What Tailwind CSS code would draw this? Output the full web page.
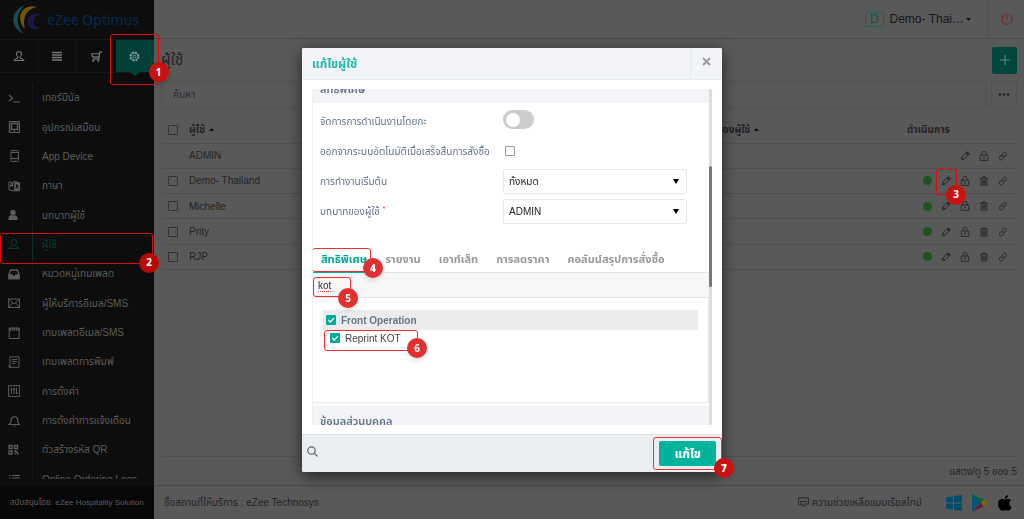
<!DOCTYPE html>
<html lang="th">
<head>
<meta charset="utf-8">
<meta name="viewport" content="width=device-width, initial-scale=1">
<title>eZee Optimus</title>
<script src="https://cdn.jsdelivr.net/npm/@tailwindcss/browser@4"></script>
</head>
<body class="h-screen overflow-hidden bg-[#595959] font-['Liberation_Sans','Noto_Sans_Thai','Noto_Sans',sans-serif] text-[10px] text-[#242424]">
<svg class="hidden">
  <symbol id="user" viewBox="0 0 16 16" fill="none" stroke="currentColor" stroke-width="1.400"><path d="M6.400 9.200C3.400 6.600 4.300 2 8 2s4.600 4.600 1.600 7.200v1.200c0 .8 4.700 1.100 4.900 3.600h-13c.2-2.500 4.900-2.800 4.900-3.600z"/></symbol>
  <symbol id="pencil" viewBox="0 0 16 16" fill="none" stroke="currentColor" stroke-width="1.500" stroke-linejoin="round"><path d="M2 14l1-4.500L10.500 2q1-1 2.300.2l1 1q1.200 1.300.2 2.300L6.500 13z"/><path d="M9.500 3l3.500 3.500M3 10l3 3" /><path d="M11 2.500l2.500 2.500" stroke-width="3"/></symbol>
  <symbol id="lock" viewBox="0 0 16 16" fill="none" stroke="currentColor" stroke-width="1.300"><path d="M2 6.500h12V15H2zM4.500 6.500V4a3.500 3.500 0 0 1 7 0v2.500M8 9v3.500M6.800 10h2.400"/></symbol>
  <symbol id="trash" viewBox="0 0 16 16" fill="none" stroke="currentColor" stroke-width="1.500"><path d="M2 3.500h12M6 3.500V1.500h4v2M3.500 4v10.500h9V4M6.200 6v6.500M8 6v6.500M9.800 6v6.500"/></symbol>
  <symbol id="link" viewBox="0 0 16 16" fill="none" stroke="currentColor" stroke-width="1.500"><path d="M7 9.500C5 8 6.500 6 7.500 4.500S10 1 12 2s2 3 1 4.500S11 9.500 9.500 9"/><path d="M9 6.500c2 1.500.5 3.500-.5 5S6 15 4 14s-2-3-1-4.500S5 6.500 6.500 7"/></symbol>
</svg>

<div class="flex h-full">
  <!-- Sidebar -->
  <aside class="relative z-10 flex w-[154px] shrink-0 flex-col bg-[#0d0d0d] text-[#5c5c5c]">
    <a href="#" class="flex h-[39px] items-center gap-1.5 pl-[13px] font-['Noto_Sans',sans-serif] text-[14px] text-[#062a4d]">
      <svg class="h-[29px] w-7" viewBox="0 0 28 29"><path d="M12 0C-3 6-4 22 11 29 2 21 3 8 12 0z" fill="#174c52"/><path d="M24 2C8-2 2 14 12 24 9 13 13 4 24 2z" fill="#715600"/><path d="M27 9c-11-3-17 9-8 15 4 1 6 0 8-2-8 1-10-9 0-13z" fill="#161a45"/></svg>
      <span>eZee Optimus</span>
    </a>
    <nav class="grid h-[34px] grid-cols-4 border-y border-[#161616] text-[#777]">
      <button class="flex items-center justify-center border-r border-[#161616]" aria-label="ผู้ใช้"><svg class="size-3"><use href="#user"/></svg></button>
      <button class="flex items-center justify-center border-r border-[#161616]" aria-label="เมนู"><svg class="size-[10px]" viewBox="0 0 10 10" stroke="currentColor" stroke-width="1.300"><path d="M0 1.500h10M0 4h10M0 6.500h10M0 9h10"/></svg></button>
      <button class="flex items-center justify-center" aria-label="รถเข็น"><svg class="size-[11px]" viewBox="0 0 12 12" fill="none" stroke="currentColor" stroke-width="1.300"><path d="M12 1.200H9.500L8.800 8.500H2M9.300 3H.8l.8 3.500h7.200"/><circle cx="2.500" cy="10.500" r=".6"/><circle cx="8" cy="10.500" r=".6"/></svg></button>
      <button class="relative flex items-center justify-center bg-[#004037] text-[#7f9f9b]" aria-label="ตั้งค่า">
        <svg class="size-[11px]" viewBox="0 0 12 12" fill="none" stroke="currentColor"><circle cx="6" cy="6" r="4.700" stroke-width="1.500" stroke-dasharray="2.200 1.500"/><circle cx="6" cy="6" r="3.800"/><circle cx="6" cy="6" r="1.500"/></svg>
        <svg class="absolute top-full h-1 w-2.5" viewBox="0 0 10 4"><path d="M0 0h10L5 4z" fill="#004037"/></svg>
        <span class="absolute -top-1.5 -left-[6px] h-[51px] w-[49px] rounded-[3px] border border-[#e00808]"></span>
        <span class="absolute top-[22px] left-[33px] z-10 flex size-5 items-center justify-center rounded-full bg-[#c91212] font-['Noto_Sans'] text-[10px] font-bold text-white shadow-md">1</span>
      </button>
    </nav>
    <div class="mt-[10px] min-h-0 flex-1 overflow-y-clip">
      <ul class="grid h-[411px] grid-rows-[repeat(14,1fr)] [&_a]:flex [&_a]:h-full [&_a]:items-center [&_span]:flex [&_span]:h-full [&_span]:w-[33px] [&_span]:items-center [&_span]:border-r [&_span]:border-[#181818] [&_span]:pl-2 [&_a]:gap-[9px] [&_svg]:size-3 [&_a]:whitespace-nowrap">
        <li><a href="#"><span><svg viewBox="0 0 12 12" fill="none" stroke="currentColor" stroke-width="1.200"><path d="M1 3l3.500 3L1 9M5 10h7"/></svg></span>เทอร์มินัล</a></li>
        <li><a href="#"><span><svg viewBox="0 0 12 12" fill="none" stroke="currentColor" stroke-width="1.400"><rect x="1.500" y=".6" width="10" height="11" rx="1"/><path d="M3.500 2.500h6v6h-6zM6 10.200h1"/></svg></span>อุปกรณ์เสมือน</a></li>
        <li><a href="#"><span><svg viewBox="0 0 12 12" fill="none" stroke="currentColor"><rect x="3" y=".6" width="7.500" height="11" rx="1"/><path d="M3 2.500h7.500M3 8.500h7.500M6.500 10.200h1"/></svg></span>App Device</a></li>
        <li><a href="#"><span><svg viewBox="0 0 12 12" fill="none" stroke="currentColor"><path d="M1 2l6 1v8l-6-1zM2 7l2-4 1 4M2 5.500h3M5.500 1l4 1"/><path d="M7 3l4.500-.5v8L7 11z" fill="currentColor"/><path d="M8 8.500l1-4 1.300 4" stroke="#0d0d0d"/></svg></span>ภาษา</a></li>
        <li><a href="#"><span><svg viewBox="0 0 12 12" fill="currentColor"><circle cx="5" cy="3.500" r="2.700"/><path d="M.5 11V9q0-2.500 3-3 1.500 1 3 0 3 .5 3 3v2z"/></svg></span>บทบาทผู้ใช้</a></li>
        <li class="relative text-[#073d35]"><a href="#"><span class="!border-[#07332d]"><svg><use href="#user"/></svg></span>ผู้ใช้</a>
          <i class="absolute top-[3px] left-0 h-[31px] w-[153px] rounded-[3px] border border-[#e00808]"></i>
          <b class="absolute top-[23px] left-[139px] z-10 flex size-5 items-center justify-center rounded-full bg-[#b90808] font-['Noto_Sans'] text-[10px] text-white">2</b></li>
        <li><a href="#"><span><svg viewBox="0 0 12 12" fill="none" stroke="currentColor" stroke-width="1.300"><path d="M1 6.500L2.500 2h7L11 6.500v4H1z"/><path d="M1 7h3l1 1.500h2L8 7h3v3.500H1z" fill="currentColor"/></svg></span>หมวดหมู่เทมเพลต</a></li>
        <li><a href="#"><span><svg viewBox="0 0 12 12" fill="none" stroke="currentColor"><path d="M.6 2h11v8.500H.6zM.6 2l5.500 5 5.500-5M.6 10.500l4-4.500M11.600 10.500l-4-4.500"/></svg></span>ผู้ให้บริการอีเมล/SMS</a></li>
        <li><a href="#"><span><svg viewBox="0 0 12 12" fill="none" stroke="currentColor"><path d="M1.200 1h10v10.500h-10z"/><path d="M1.200 2.500h10" stroke-width="2.500" stroke-dasharray="1.500 .7"/></svg></span>เทมเพลตอีเมล/SMS</a></li>
        <li><a href="#"><span><svg viewBox="0 0 12 12" fill="none" stroke="currentColor"><path d="M2 .8h9v10.500H2zM4 3.500h5M4 5.500h5M4 7.500h3M1 9v2.300h2"/></svg></span>เทมเพลตการพิมพ์</a></li>
        <li><a href="#"><span><svg viewBox="0 0 12 12" fill="none" stroke="currentColor"><path d="M.6 .6h11v11H.6zM3.500 3v6M6 3v6M8.500 3v6M2.500 5h2M5 4h2M7.500 8h2.500"/></svg></span>การตั้งค่า</a></li>
        <li><a href="#"><span><svg viewBox="0 0 12 12" fill="none" stroke="currentColor" stroke-width="1.200"><path d="M1 9.500h10.500C9.500 8 9.800 6 9.500 4.500 9 .8 3.800.8 3.200 4.500 3 6 3.300 8 1 9.500zM5.500 11h2"/></svg></span>การตั้งค่าการแจ้งเตือน</a></li>
        <li><a href="#"><span><svg viewBox="0 0 12 12" fill="none" stroke="currentColor" stroke-width="1.300"><path d="M1 1.500h3v3H1zM6.500 1.500h3v3h-3zM1 7h3v3H1zM6 7h2v1.500h2M6.500 10h1M9 10h1.500"/></svg></span>ตัวสร้างรหัส QR</a></li>
        <li><a href="#"><span><svg viewBox="0 0 12 12" stroke="currentColor" stroke-width="1.200"><path d="M1 2.500h1.500M4 2.500h8M1 5h1.500M4 5h8M1 9.500h1.500M4 9.500h8"/></svg></span>Online Ordering Logs</a></li>
      </ul>
    </div>
    <div class="mt-[7px] flex h-[33px] items-center bg-[#080808] pl-2.5 text-[8px] whitespace-nowrap">สนับสนุนโดย: eZee Hospitality Solution</div>
  </aside>

  <div class="flex min-w-0 flex-1 flex-col">
    <header class="flex h-[39px] items-center justify-end border-b border-[#4c4c4e]">
      <button class="flex items-center gap-1.5 pr-[17px] text-[12px] text-[#161616]">
        <span class="flex h-[15px] w-[19px] items-center justify-center rounded-[1px] border border-[#1d6259] text-[12px] text-[#0c564c]">D</span>
        <span class="flex items-center gap-0.5">Demo- Thai… <svg class="h-[3px] w-[5px]" viewBox="0 0 6 3"><path d="M0 0h6L3 3z"/></svg></span>
      </button>
      <button class="flex h-full w-9 items-center justify-center border-l border-[#505050] text-[#762b2b]" aria-label="ออกจากระบบ"><svg class="size-3" viewBox="0 0 12 12" fill="none" stroke="currentColor" stroke-width="1.200"><path d="M3.500 2a5 5 0 1 0 5 0M6 0v6"/></svg></button>
    </header>
    <main class="flex min-h-0 flex-1 flex-col px-[7px]">
      <div class="flex h-[42px] items-center justify-between">
        <h1 class="text-[15px] text-[#1e2329]">ผู้ใช้</h1>
        <button class="flex h-[27px] w-[25px] items-center justify-center rounded-[2px] bg-[#00463d] text-[#5f8a85]" aria-label="เพิ่ม"><svg class="size-[10px]" viewBox="0 0 10 10" stroke="currentColor"><path d="M5 0v10M0 5h10"/></svg></button>
      </div>
      <div class="flex h-[27px]">
        <input type="text" aria-label="ค้นหา" placeholder="ค้นหา" class="min-w-0 flex-1 rounded-[2px] border border-[#515151] pl-[11px] placeholder:text-[#2b2b2b]">
        <button class="ml-1 flex w-[26px] items-center justify-center rounded-[2px] border border-[#515151]" aria-label="เพิ่มเติม"><svg class="h-[3px] w-3" viewBox="0 0 12 3" fill="#1e2329"><circle cx="2" cy="1.500" r="1.300"/><circle cx="6" cy="1.500" r="1.300"/><circle cx="10" cy="1.500" r="1.300"/></svg></button>
      </div>
      <div class="flex-1 border-b border-[#505050]">
        <table class="h-[162px] w-full table-fixed text-left [&_td]:p-0 [&_tr]:border-b [&_tr]:border-[#505050] [&_input]:block [&_input]:size-[10px] [&_input]:ml-[7px] [&_input]:appearance-none [&_input]:rounded-[1px] [&_input]:border [&_input]:border-[#333]">
          <thead><tr class="h-[35px]">
            <th class="w-7"><input type="checkbox" aria-label="เลือกทั้งหมด" class="mt-2.5"></th>
            <th class="pt-2"><span class="flex items-center gap-1">ผู้ใช้ <svg class="h-[3px] w-[5px]" viewBox="0 0 6 3"><path d="M0 3h6L3 0z"/></svg></span></th>
            <th class="w-[220px] pt-2"><span class="flex items-center gap-1">บทบาทของผู้ใช้ <svg class="h-[3px] w-[5px]" viewBox="0 0 6 3"><path d="M0 3h6L3 0z"/></svg></span></th>
            <th class="w-[110px] pt-2 font-bold">ดำเนินการ</th>
          </tr></thead>
          <tbody class="[&_div]:relative [&_div]:flex [&_div]:items-center [&_div]:justify-end [&_div]:gap-[9px] [&_div]:pr-[9px] [&_div_svg]:block [&_div_svg]:size-[10px] [&_div]:-ml-4 [&_em]:size-[9px] [&_em]:rounded-full [&_em]:bg-[#1b541e]">
            <tr><td></td><td>ADMIN</td><td></td><td><div><button aria-label="แก้ไข"><svg><use href="#pencil"/></svg></button><button aria-label="ล็อก"><svg><use href="#lock"/></svg></button><button aria-label="ลิงก์"><svg><use href="#link"/></svg></button></div></td></tr>
            <tr><td><input type="checkbox" aria-label="Demo- Thailand"></td><td>Demo- Thailand</td><td></td><td><div><em></em><button aria-label="แก้ไข"><svg><use href="#pencil"/></svg></button><button aria-label="ล็อก"><svg><use href="#lock"/></svg></button><button aria-label="ลบ"><svg><use href="#trash"/></svg></button><button aria-label="ลิงก์"><svg><use href="#link"/></svg></button>
              <i class="absolute -top-[7px] right-[60px] h-[26px] w-[21px] rounded-[2px] border border-[#e00808]"></i><b class="absolute top-[9px] right-[51px] z-10 flex size-5 items-center justify-center rounded-full bg-[#c91212] font-['Noto_Sans'] text-[10px] text-white">3</b></div></td></tr>
            <tr><td><input type="checkbox" aria-label="Michelle"></td><td>Michelle</td><td></td><td><div><em></em><button aria-label="แก้ไข"><svg><use href="#pencil"/></svg></button><button aria-label="ล็อก"><svg><use href="#lock"/></svg></button><button aria-label="ลบ"><svg><use href="#trash"/></svg></button><button aria-label="ลิงก์"><svg><use href="#link"/></svg></button></div></td></tr>
            <tr><td><input type="checkbox" aria-label="Prity"></td><td>Prity</td><td></td><td><div><em></em><button aria-label="แก้ไข"><svg><use href="#pencil"/></svg></button><button aria-label="ล็อก"><svg><use href="#lock"/></svg></button><button aria-label="ลบ"><svg><use href="#trash"/></svg></button><button aria-label="ลิงก์"><svg><use href="#link"/></svg></button></div></td></tr>
            <tr><td><input type="checkbox" aria-label="RJP"></td><td>RJP</td><td></td><td><div><em></em><button aria-label="แก้ไข"><svg><use href="#pencil"/></svg></button><button aria-label="ล็อก"><svg><use href="#lock"/></svg></button><button aria-label="ลบ"><svg><use href="#trash"/></svg></button><button aria-label="ลิงก์"><svg><use href="#link"/></svg></button></div></td></tr>
          </tbody>
        </table>
      </div>
      <p class="flex h-7 items-center justify-end">แสดง/ดู 5 ของ 5</p>
    </main>
    <footer class="flex h-[34px] items-center justify-between border-t border-[#484848] pr-3 pl-2.5">
      <span>ชื่อสถานที่ให้บริการ : eZee Technosys</span>
      <div class="flex items-center gap-[10px]">
        <a href="#" class="mr-[14px] flex items-center gap-[3px]"><svg class="size-[11px]" viewBox="0 0 12 12" fill="none" stroke="currentColor"><path d="M3 8.500H.5V1h11v6.500H10M3 5h7M10 7.500H8l-1.500 3L5 8.500H3V5"/></svg>ความช่วยเหลือแบบเรียลไทม์</a>
        <svg class="size-4" viewBox="0 0 16 16" fill="#044b6e"><path d="M0 2.500l7-1v6H0zM8 1.300L16 0v7.500H8zM0 8.500h7v6l-7-1zM8 8.500h8V16l-8-1.300z"/></svg>
        <svg class="h-[18px] w-4" viewBox="0 0 16 18"><path d="M0 0v18l9-9z" fill="#08527b"/><path d="M0 0l12 6-3 3z" fill="#066638"/><path d="M0 18l12-6-3-3z" fill="#701824"/><path d="M12 6l4 3-4 3-3-3z" fill="#816a05"/></svg>
        <svg class="h-4 w-[14px]" viewBox="0 0 14 16" fill="#000"><path d="M10 0c.1 2-1.500 3.800-3.200 3.800C6.600 2 8.300.2 10 0zM13 5.500c-3 1.800-2 5.500.7 6.300C12.500 15 11 16 9.500 15.600c-1.500-.6-2.500-.6-4 0C2.500 16.500 0 12 0 8.500 0 4.500 3.500 3.500 5.500 4.300c1.200.4 1.600.4 3 0 1.500-.6 3.500-.2 4.500 1.200z"/></svg>
      </div>
    </footer>
  </div>
</div>

<!-- Edit user dialog -->
<div class="fixed inset-0 z-20 flex items-start justify-center pt-12">
  <section role="dialog" aria-labelledby="dlg" class="w-[420px] rounded-[2px] bg-white text-[#66748a] shadow-[0_4px_16px_rgba(0,0,0,0.6)]">
    <div class="flex h-8 items-center justify-between rounded-t-[2px] border-b border-[#e7ebef] bg-[#f2f4f8] pl-2.5">
      <h2 id="dlg" class="text-[12px] font-bold text-[#1fb9a6]">แก้ไขผู้ใช้</h2>
      <button class="flex h-full w-8 items-center justify-center border-l border-[#e7ebef] pb-1 text-[#999]" aria-label="ปิด"><svg class="size-[9px]" viewBox="0 0 9 9" stroke="currentColor" stroke-width="1.800"><path d="M1 1l7 7M8 1L1 8"/></svg></button>
    </div>
    <div class="flex h-[354px] px-2.5 py-[9px]">
      <div class="min-w-0 flex-1 overflow-hidden border-l border-[#eef0f4]">
        <h3 class="-mt-[14px] flex h-7 items-center bg-[#f2f4f8] pl-[7px] text-[11px] font-semibold">สิทธิพิเศษ</h3>
        <div class="mt-[3px] pl-[7px] [&>div]:flex [&>div]:h-[30px] [&>div]:items-center [&_label]:w-[183px] [&_label]:shrink-0 [&_label]:whitespace-nowrap">
          <div><label for="shift">จัดการการดำเนินงานโดยกะ</label><input id="shift" type="checkbox" role="switch" class="mb-1 h-[19px] w-[31px] appearance-none rounded-full bg-[#ccc] before:mt-[3px] before:ml-[3px] before:block before:size-[14px] before:rounded-full before:bg-white"></div>
          <div><label for="auto">ออกจากระบบอัตโนมัติเมื่อเสร็จสิ้นการสั่งซื้อ</label><input id="auto" type="checkbox" class="ml-0.5 size-[10px] appearance-none rounded-[1px] border border-[#999] bg-white"></div>
          <div><label for="def">การทำงานเริ่มต้น</label><span class="relative"><select id="def" class="h-[25px] w-[184px] appearance-none rounded-[2px] border border-[#e4e9ee] bg-white pl-[5px] text-[#222]"><option>ทั้งหมด</option></select><svg class="pointer-events-none absolute top-[10px] right-2 h-[5px] w-[6px]" viewBox="0 0 6 5"><path d="M0 0h6L3 5z"/></svg></span></div>
          <div><label for="role">บทบาทของผู้ใช้ <sup class="text-[#f33]">*</sup></label><span class="relative"><select id="role" class="h-[25px] w-[184px] appearance-none rounded-[2px] border border-[#e4e9ee] bg-white pl-[5px] text-[#222]"><option>ADMIN</option></select><svg class="pointer-events-none absolute top-[10px] right-2 h-[5px] w-[6px]" viewBox="0 0 6 5"><path d="M0 0h6L3 5z"/></svg></span></div>
        </div>
        <div role="tablist" class="mt-5 flex h-[27px] gap-[18px] border-b border-[#dfe3ea] text-[11px] font-bold whitespace-nowrap text-[#999]">
          <button role="tab" aria-selected="true" class="relative -mr-2 -mb-px border-b border-[#00b09c] px-2 text-[#00a592]">สิทธิพิเศษ
            <i class="absolute top-[2px] -left-px h-6 w-[59px] rounded-[3px] border border-[#f03030]"></i><b class="absolute top-3 left-[50px] z-10 flex size-5 items-center justify-center rounded-full bg-[#e03030] font-['Noto_Sans'] text-[10px] text-white shadow-md">4</b></button>
          <button role="tab">รายงาน</button><button role="tab">เอาท์เล็ท</button><button role="tab">การลดราคา</button><button role="tab">คอลัมน์สรุปการสั่งซื้อ</button>
        </div>
        <div class="relative flex h-[25px] border-b border-[#dfe6ee] bg-[#f7f7f7]">
          <input type="text" value="kot" aria-label="ค้นหาสิทธิ์" class="w-full pl-[5px] text-[#333] underline decoration-[#f44] decoration-dotted decoration-1 underline-offset-2">
          <i class="absolute top-1 left-0 h-5 w-[38px] rounded-[3px] border border-[#f03030]"></i><b class="absolute top-[15px] left-[25px] z-10 flex size-5 items-center justify-center rounded-full bg-[#e03030] font-['Noto_Sans'] text-[10px] text-white shadow-md">5</b>
        </div>
        <div class="h-[105px] border-r border-b border-[#e4e8ee] px-[10px] pt-3">
          <label class="flex h-5 items-center gap-[5px] bg-[#ececec] pl-[3px] font-bold"><input type="checkbox" checked class="peer sr-only"><svg class="size-[10px]" viewBox="0 0 11 11" fill="none" stroke="#fff" stroke-width="1.400"><rect width="11" height="11" rx="1" fill="#00ab97" stroke="none"/><path d="M2.500 5.500l2.200 2.200L8.700 3.500"/></svg>Front Operation</label>
          <div class="relative"><label class="flex h-4 items-center gap-[5px] pl-[7px] text-[#444]"><input type="checkbox" checked class="peer sr-only"><svg class="size-[10px]" viewBox="0 0 11 11" fill="none" stroke="#fff" stroke-width="1.400"><rect width="11" height="11" rx="1" fill="#00ab97" stroke="none"/><path d="M2.500 5.500l2.200 2.200L8.700 3.500"/></svg>Reprint KOT</label>
            <i class="absolute top-0 left-px h-[21px] w-[94px] rounded-[3px] border border-[#f03030]"></i><b class="absolute top-2 left-[84px] flex size-5 items-center justify-center rounded-full bg-[#e03030] font-['Noto_Sans'] text-[10px] text-white shadow-md">6</b></div>
        </div>
        <h3 class="mt-[3px] flex h-[30px] items-center bg-[#f2f4f8] pl-[7px] text-[11px] font-semibold">ข้อมูลส่วนบุคคล</h3>
      </div>
      <div class="w-[3px] rounded-sm bg-[#ddd] pt-[77px]"><div class="h-[121px] rounded-sm bg-[#777]"></div></div>
    </div>
    <div class="flex h-[38px] items-center justify-between rounded-b-[2px] border-t border-[#dfe5e9] bg-[#eaeef1] pr-[6px] pl-[5px]">
      <button aria-label="ค้นหา" class="pb-1 text-[#666]"><svg class="size-[11px]" viewBox="0 0 11 11" fill="none" stroke="currentColor" stroke-width="1.200"><circle cx="4.500" cy="4.500" r="3.700"/><path d="M7.200 7.200L10.500 10.500"/></svg></button>
      <button class="relative h-[25px] w-[57px] rounded-[2px] bg-[#00b39d] text-[12px] font-bold text-white">แก้ไข
        <i class="absolute -top-[4px] -left-[6px] h-[33px] w-[69px] rounded-[3px] border border-[#f03030]"></i><b class="absolute top-[17px] left-[55px] flex size-5 items-center justify-center rounded-full bg-[#c91212] font-['Noto_Sans'] text-[10px] text-white">7</b></button>
    </div>
  </section>
</div>
</body>
</html>
